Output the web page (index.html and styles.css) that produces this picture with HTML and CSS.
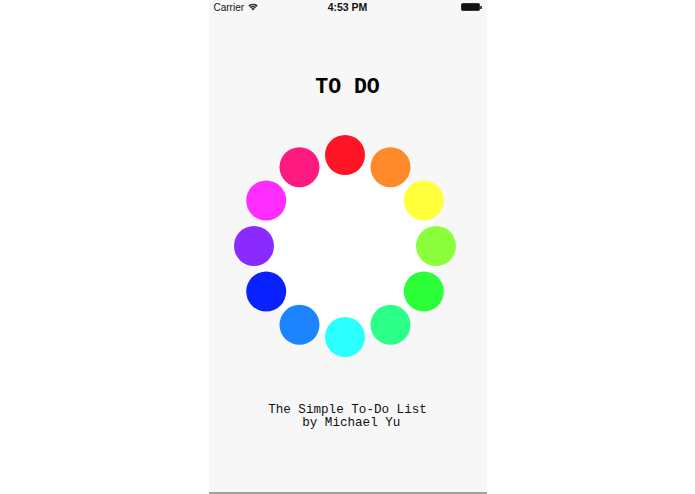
FILE: index.html
```html
<!DOCTYPE html>
<html>
<head>
<meta charset="utf-8">
<link rel="stylesheet" href="styles.css">
</head>
<body>
<div class="phone">
  <div class="status">
    <div class="carrier">Carrier
      <svg class="wifi" width="10" height="8" viewBox="0 0 10 8">
        <path d="M5 7.6 L0.3 2.6 A6.8 6.8 0 0 1 9.7 2.6 Z" fill="#222"/>
        <path d="M1.6 3.9 A5 5 0 0 1 8.4 3.9" fill="none" stroke="#f7f7f7" stroke-width="0.8"/>
        <path d="M3 5.4 A3 3 0 0 1 7 5.4" fill="none" stroke="#f7f7f7" stroke-width="0.8"/>
      </svg>
    </div>
    <div class="time">4:53 PM</div>
    <div class="battery"><span class="cell"></span><span class="nub"></span></div>
  </div>
  <h1 class="title">TO DO</h1>
  <svg class="ring" width="240" height="240" viewBox="0 0 240 240">
    <circle cx="117" cy="120" r="91" fill="#ffffff"/>
    <circle cx="117" cy="29" r="20" fill="#ff1525"/>
    <circle cx="162.5" cy="41.2" r="20" fill="#ff8a2a"/>
    <circle cx="195.8" cy="74.5" r="20" fill="#ffff3c"/>
    <circle cx="208" cy="120" r="20" fill="#8cff3c"/>
    <circle cx="195.8" cy="165.5" r="20" fill="#2cff38"/>
    <circle cx="162.5" cy="198.8" r="20" fill="#2cff88"/>
    <circle cx="117" cy="211" r="20" fill="#2cffff"/>
    <circle cx="71.5" cy="198.8" r="20" fill="#1c84ff"/>
    <circle cx="38.2" cy="165.5" r="20" fill="#0a22ff"/>
    <circle cx="26" cy="120" r="20" fill="#8a2aff"/>
    <circle cx="38.2" cy="74.5" r="20" fill="#ff2cff"/>
    <circle cx="71.5" cy="41.2" r="20" fill="#ff1a80"/>
  </svg>
  <p class="subtitle">The Simple To-Do List<br>&nbsp;by Michael Yu</p>
</div>
</body>
</html>
```
FILE: styles.css
```css
html, body {
  margin: 0;
  padding: 0;
  background: #ffffff;
}
body {
  display: flex;
  justify-content: center;
  height: 494px;
  overflow: hidden;
}
.phone {
  width: 278px;
  height: 492px;
  background: #f7f7f7;
  border-bottom: 2px solid #a0a0a0;
  display: flex;
  flex-direction: column;
  align-items: center;
}
.status {
  align-self: stretch;
  height: 14px;
  display: flex;
  align-items: center;
  justify-content: space-between;
  padding: 0 5px 0 5px;
  font-family: "Liberation Sans", Arial, sans-serif;
  font-size: 10px;
  color: #111;
}
.carrier {
  display: flex;
  align-items: center;
  gap: 4px;
  width: 60px;
}
.wifi {
  display: block;
}
.time {
  font-weight: bold;
  font-size: 10.5px;
}
.battery {
  width: 60px;
  display: flex;
  justify-content: flex-end;
  align-items: center;
}
.cell {
  width: 17px;
  height: 6px;
  background: #111;
  border-radius: 1.5px;
  border: 0.5px solid #333;
}
.nub {
  width: 1.5px;
  height: 3px;
  background: #444;
}
.title {
  margin: 61px 0 0 0;
  font-family: "Liberation Mono", "Courier New", monospace;
  font-weight: bold;
  font-size: 21.5px;
  line-height: 24px;
  color: #000;
}
.ring {
  display: block;
  margin-top: 27px;
}
.subtitle {
  margin: 38px 0 0 0;
  font-family: "Liberation Mono", "Courier New", monospace;
  font-size: 12.6px;
  line-height: 13px;
  text-align: center;
  color: #111;
  white-space: pre;
}
```
